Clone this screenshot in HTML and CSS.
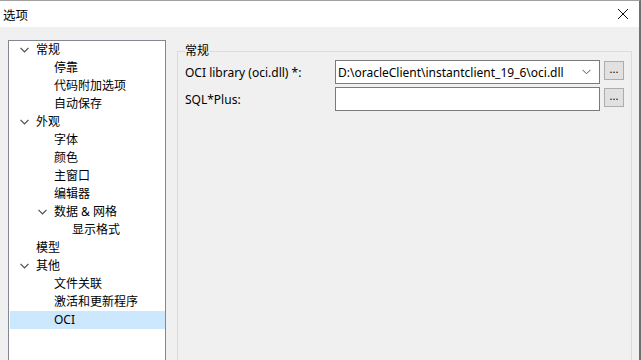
FILE: index.html
```html
<!DOCTYPE html>
<html lang="zh-CN">
<head>
    <meta charset="UTF-8">
    <title>选项</title>
    <link rel="stylesheet" href="styles.css">
</head>
<body>
    <div class="window">
        <!-- 标题栏 -->
        <div class="titlebar">
            <span class="title">选项</span>
            <svg class="close" width="12" height="12" viewBox="0 0 12 12">
                <path d="M1 1 L11 11 M11 1 L1 11" stroke="#111" stroke-width="1" fill="none"/>
            </svg>
        </div>

        <div class="main">
            <!-- 左侧树 -->
            <ul class="tree">
                <li class="node lv0"><span class="arrow"><svg width="9" height="6" viewBox="0 0 9 6"><path d="M0.5 0.8 L4.5 4.8 L8.5 0.8" stroke="#4d4d4d" stroke-width="1.2" fill="none"/></svg></span>常规</li>
                <li class="node lv1">停靠</li>
                <li class="node lv1">代码附加选项</li>
                <li class="node lv1">自动保存</li>
                <li class="node lv0"><span class="arrow"><svg width="9" height="6" viewBox="0 0 9 6"><path d="M0.5 0.8 L4.5 4.8 L8.5 0.8" stroke="#4d4d4d" stroke-width="1.2" fill="none"/></svg></span>外观</li>
                <li class="node lv1">字体</li>
                <li class="node lv1">颜色</li>
                <li class="node lv1">主窗口</li>
                <li class="node lv1">编辑器</li>
                <li class="node lv1"><span class="arrow"><svg width="9" height="6" viewBox="0 0 9 6"><path d="M0.5 0.8 L4.5 4.8 L8.5 0.8" stroke="#4d4d4d" stroke-width="1.2" fill="none"/></svg></span>数据 &amp; 网格</li>
                <li class="node lv2">显示格式</li>
                <li class="node lv0">模型</li>
                <li class="node lv0"><span class="arrow"><svg width="9" height="6" viewBox="0 0 9 6"><path d="M0.5 0.8 L4.5 4.8 L8.5 0.8" stroke="#4d4d4d" stroke-width="1.2" fill="none"/></svg></span>其他</li>
                <li class="node lv1">文件关联</li>
                <li class="node lv1">激活和更新程序</li>
                <li class="node lv1 selected">OCI</li>
            </ul>

            <!-- 右侧设置 -->
            <fieldset class="group">
                <legend>常规</legend>
                <div class="row">
                    <label>OCI library (oci.dll) *:</label>
                    <div class="combo">
                        <span class="combo-text">D:\oracleClient\instantclient_19_6\oci.dll</span>
                        <svg class="combo-arrow" width="9" height="6" viewBox="0 0 9 6"><path d="M0.5 0.8 L4.5 4.8 L8.5 0.8" stroke="#555" stroke-width="1" fill="none"/></svg>
                    </div>
                    <button class="browse">...</button>
                </div>
                <div class="row">
                    <label>SQL*Plus:</label>
                    <input class="textbox" type="text">
                    <button class="browse">...</button>
                </div>
            </fieldset>
        </div>
    </div>
</body>
</html>
```

FILE: styles.css
```css
* {
    box-sizing: border-box;
}

html, body {
    margin: 0;
    padding: 0;
    height: 100%;
    overflow: hidden;
}

body {
    font-family: "Noto Sans", "Noto Sans CJK SC", sans-serif;
    font-size: 12px;
    color: #000;
    background: #fff;
}

.window {
    width: 641px;
    height: 360px;
    display: flex;
    flex-direction: column;
    border-right: 2px solid #707070;
    border-top: 1px solid #a0a0a0;
}

/* 标题栏 */
.titlebar {
    height: 26px;
    flex: none;
    background: #fff;
    display: flex;
    align-items: center;
    justify-content: space-between;
    padding: 0 8px 0 3px;
}

.title {
    font-size: 12.5px;
}

.close {
    margin-right: 2px;
}

.main {
    flex: 1;
    min-height: 0;
    overflow: hidden;
    background: #f0f0f0;
    display: flex;
    align-items: flex-start;
    padding: 13px 0 0 8px;
}

/* 左侧树 */
.tree {
    list-style: none;
    margin: 0;
    padding: 0 0 0 1px;
    width: 158px;
    height: 321px;
    flex: none;
    background: #fff;
    border: 1px solid #828790;
    border-bottom: none;
}

.node {
    height: 18px;
    line-height: 18px;
    white-space: nowrap;
    display: flex;
    align-items: center;
}

.lv0 { padding-left: 26px; }
.lv1 { padding-left: 44px; }
.lv2 { padding-left: 62px; }

.arrow {
    width: 18px;
    margin-left: -18px;
    display: flex;
    align-items: center;
    padding-left: 2px;
}

.selected {
    background: #cce8ff;
}

/* 右侧分组 */
.group {
    margin: 3px 0 0 11px;
    width: 455px;
    height: 318px;
    border: 1px solid #dcdcdc;
    border-bottom: none;
    padding: 1px 0 0 7px;
}

.group legend {
    padding: 0;
    height: 16px;
    line-height: 16px;
    margin-left: 0;
}

.row {
    display: flex;
    align-items: center;
    margin-bottom: 3px;
}

.row label {
    width: 150px;
    flex: none;
}

.combo,
.textbox {
    width: 265px;
    height: 24px;
    border: 1px solid #7a7a7a;
    background: #fff;
    margin: 0;
}

.combo {
    display: flex;
    align-items: center;
    justify-content: space-between;
    padding: 0 8px 0 2px;
}

.combo-text {
    white-space: nowrap;
}

.textbox {
    font: inherit;
    outline: none;
}

.browse {
    width: 20px;
    height: 19px;
    margin: 1px 0 0 4px;
    padding: 0 0 4px;
    border: 1px solid #adadad;
    background: #e1e1e1;
    font: inherit;
    font-size: 11px;
    line-height: 12px;
    align-self: flex-start;
}
```
